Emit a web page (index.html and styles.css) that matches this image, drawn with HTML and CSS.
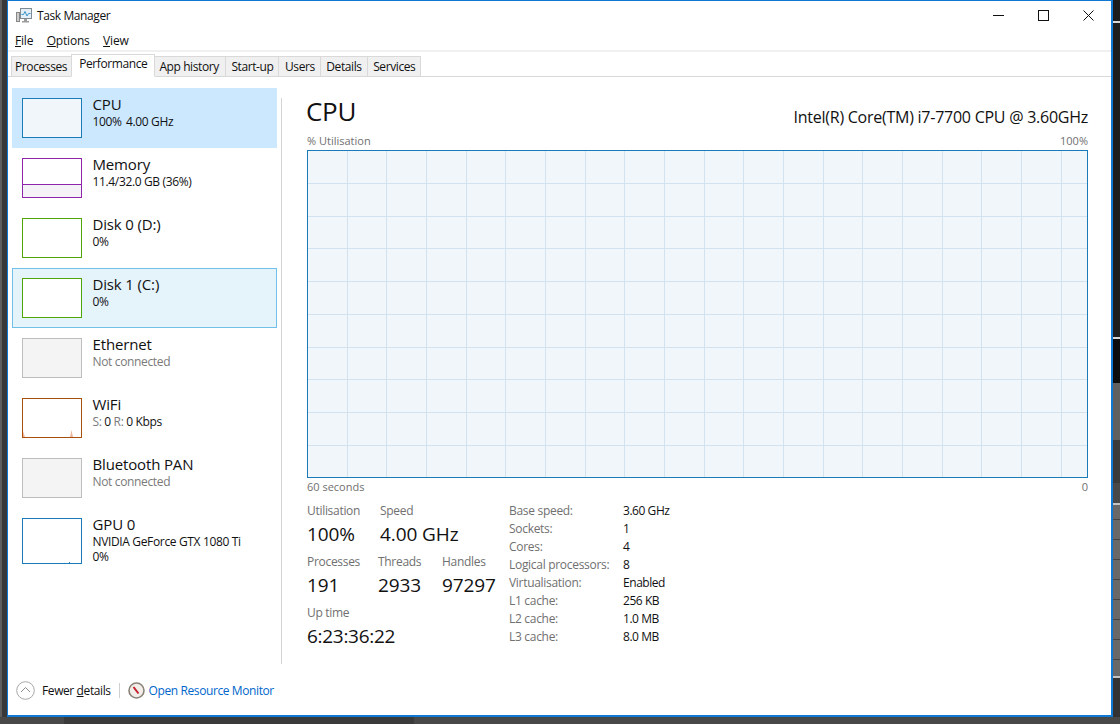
FILE: index.html
```html
<!DOCTYPE html>
<html lang="en">
<head>
<meta charset="utf-8">
<title>Task Manager</title>
<link rel="stylesheet" href="styles.css">
</head>
<body>
<div class="desktop">
<div class="desk-row">
<div class="strip-left"></div>
<div class="window">
  <header class="titlebar">
    <svg class="app-icon" width="16" height="15" viewBox="0 0 16 15"><rect x="4.500" y="0.500" width="11" height="10" fill="#e3eef6" stroke="#7f8c96"/><path d="M5.500 6.500h2l1.500-3 2 4.500 1.500-2.500h2" fill="none" stroke="#3f94cc"/><rect x="0.500" y="4.500" width="3" height="9" fill="#cfcfcf" stroke="#868686"/><path d="M8 11h3v2H8zM6 13h7v1.500H6z" fill="#9c9c9c"/></svg>
    <span class="title">Task Manager</span>
    <div class="controls">
      <svg class="ctl" width="11" height="11" viewBox="0 0 11 11"><path d="M0 5.500h11" stroke="#111" fill="none"/></svg>
      <svg class="ctl" width="11" height="11" viewBox="0 0 11 11"><rect x="0.500" y="0.500" width="10" height="10" stroke="#111" fill="none"/></svg>
      <svg class="ctl" width="11" height="11" viewBox="0 0 11 11"><path d="M0.500 0.500l10 10M10.500 0.500l-10 10" stroke="#111" fill="none"/></svg>
    </div>
  </header>
  <nav class="menu"><span><u>F</u>ile</span><span><u>O</u>ptions</span><span><u>V</u>iew</span></nav>
  <div class="tabs">
    <span class="tab">Processes</span>
    <span class="tab active">Performance</span>
    <span class="tab">App history</span>
    <span class="tab">Start-up</span>
    <span class="tab">Users</span>
    <span class="tab">Details</span>
    <span class="tab">Services</span>
  </div>
  <main class="content">
    <aside class="sidebar">
      <div class="item selected"><div class="thumb t-cpu"></div><div class="info"><div class="name">CPU</div><div class="sub">100%&nbsp;&thinsp;4.00 GHz</div></div></div>
      <div class="item"><div class="thumb t-mem"><div class="mem-fill"></div></div><div class="info"><div class="name">Memory</div><div class="sub">11.4/32.0 GB (36%)</div></div></div>
      <div class="item"><div class="thumb t-disk"></div><div class="info"><div class="name">Disk 0 (D:)</div><div class="sub">0%</div></div></div>
      <div class="item hovered"><div class="thumb t-disk"></div><div class="info"><div class="name">Disk 1 (C:)</div><div class="sub">0%</div></div></div>
      <div class="item"><div class="thumb t-off"></div><div class="info"><div class="name">Ethernet</div><div class="sub muted">Not connected</div></div></div>
      <div class="item"><div class="thumb t-wifi"><svg class="spark" width="58" height="38" viewBox="0 0 58 38"><path d="M0 38V32L2 38zM47 38L48.500 31 50 38z" fill="#efb79c"/></svg></div><div class="info"><div class="name">WiFi</div><div class="sub"><span class="muted">S:</span> 0 <span class="muted">R:</span> 0 Kbps</div></div></div>
      <div class="item"><div class="thumb t-off"></div><div class="info"><div class="name">Bluetooth PAN</div><div class="sub muted">Not connected</div></div></div>
      <div class="item gpu"><div class="thumb t-gpu"><svg class="spark" width="58" height="44" viewBox="0 0 58 44"><path d="M46 43h1v1h-1z" fill="#1b7ab8"/></svg></div><div class="info"><div class="name">GPU 0</div><div class="sub">NVIDIA GeForce GTX 1080 Ti</div><div class="sub">0%</div></div></div>
    </aside>
    <section class="detail">
      <div class="head"><h1>CPU</h1><div class="model">Intel(R) Core(TM) i7-7700 CPU @ 3.60GHz</div></div>
      <div class="axis top"><span>% Utilisation</span><span>100%</span></div>
      <svg class="graph" width="781" height="328" viewBox="0 0 781 328">
        <rect x="0.500" y="0.500" width="780" height="327" fill="#f1f6fa"/>
        <path d="M40.500 1V327M79.500 1V327M119.500 1V327M159.500 1V327M198.500 1V327M238.500 1V327M278.500 1V327M317.500 1V327M357.500 1V327M397.500 1V327M436.500 1V327M476.500 1V327M516.500 1V327M555.500 1V327M595.500 1V327M635.500 1V327M674.500 1V327M714.500 1V327M754.500 1V327M1 33.500H780M1 66.500H780M1 98.500H780M1 131.500H780M1 164.500H780M1 197.500H780M1 229.500H780M1 262.500H780M1 295.500H780" fill="none" stroke="#d2e2ef"/>
        <rect x="0.500" y="0.500" width="780" height="327" fill="none" stroke="#1b7ab8"/>
      </svg>
      <div class="axis bottom"><span>60 seconds</span><span>0</span></div>
      <div class="stats">
        <div class="live">
          <div class="row r1">
            <div class="stat s-util"><div class="label">Utilisation</div><div class="value">100%</div></div>
            <div class="stat"><div class="label">Speed</div><div class="value">4.00 GHz</div></div>
          </div>
          <div class="row r2">
            <div class="stat s-proc"><div class="label">Processes</div><div class="value">191</div></div>
            <div class="stat s-thr"><div class="label">Threads</div><div class="value">2933</div></div>
            <div class="stat"><div class="label">Handles</div><div class="value">97297</div></div>
          </div>
          <div class="row r3">
            <div class="stat"><div class="label">Up time</div><div class="value uptime">6:23:36:22</div></div>
          </div>
        </div>
        <dl class="specs">
          <dt>Base speed:</dt><dd>3.60 GHz</dd>
          <dt>Sockets:</dt><dd>1</dd>
          <dt>Cores:</dt><dd>4</dd>
          <dt>Logical processors:</dt><dd>8</dd>
          <dt>Virtualisation:</dt><dd>Enabled</dd>
          <dt>L1 cache:</dt><dd>256 KB</dd>
          <dt>L2 cache:</dt><dd>1.0 MB</dd>
          <dt>L3 cache:</dt><dd>8.0 MB</dd>
        </dl>
      </div>
    </section>
  </main>
  <footer class="footer">
    <svg class="fewer" width="19" height="19" viewBox="0 0 19 19"><circle cx="9.500" cy="9.500" r="8.800" fill="#fff" stroke="#a8a8a8"/><path d="M5 11l4.500-4.500L14 11" fill="none" stroke="#8c8c8c"/></svg>
    <span class="fewer-text">Fewer <u>d</u>etails</span>
    <span class="sep"></span>
    <svg class="res" width="17" height="17" viewBox="0 0 17 17"><circle cx="8.500" cy="8.500" r="7.500" fill="#f2efea" stroke="#8a8378" stroke-width="1.600"/><path d="M5.500 5l5 6.500" stroke="#c4202a" stroke-width="2" fill="none"/></svg>
    <a class="link">Open Resource Monitor</a>
  </footer>
</div>
<div class="strip-right"></div>
</div>
<div class="strip-bottom"></div>
</div>
</body>
</html>
```
FILE: styles.css
```css
* { box-sizing: border-box; }
html, body { margin: 0; height: 100%; }
body { font-family: "Open Sans", "Noto Sans", sans-serif; font-size: 12px; color: #111; overflow: hidden; }
.desktop { width: 1120px; height: 724px; background: #444; display: flex; flex-direction: column; }
.desk-row { display: flex; height: 717px; flex: none; }
.strip-left { width: 7px; flex: none; background: linear-gradient(90deg, #5e5e5e 0 2px, #383838 2px 7px); }
.strip-right { width: 7px; flex: none;
  background:
    linear-gradient(#1c1c1c 0 21px, #d8d8d8 21px 23px, #1e1e1e 23px 337px, #d8d8d8 337px 339px, #0c0c0c 339px 383px, #606060 383px 440px, #3a3a3a 440px 483px, #484848 483px 503px, #c4c4c4 503px 505px, transparent 505px 676px, #c4c4c4 676px 678px, #333 678px 717px),
    repeating-linear-gradient(#686868 0 19px, #444 19px 20px);
}
.strip-bottom { flex: 1; background: linear-gradient(90deg, #484848 0 64px, #3a3a3a 64px 414px, #484848 414px); }
.window { width: 1106px; height: 717px; flex: none; background: #fff; border: 1px solid #0f78d2; border-bottom-width: 2px; border-right-width: 2px; display: flex; flex-direction: column; }
.titlebar { height: 29px; display: flex; align-items: center; padding-left: 8px; flex: none; }
.app-icon { margin-right: 5px; }
.title { font-size: 12px; letter-spacing: -0.4px; }
.controls { margin-left: auto; display: flex; gap: 34px; padding-right: 17px; }
.ctl { display: block; }
.menu { height: 22px; display: flex; gap: 13.500px; padding-left: 7px; align-items: center; border-bottom: 2px solid #f0f0f0; flex: none; letter-spacing: -0.2px; padding-top: 1px; }
.tabs { height: 25px; display: flex; align-items: flex-end; padding-left: 3px; border-bottom: 1px solid #d9d9d9; flex: none; }
.tab { height: 21px; margin-bottom: -1px; padding: 0 5px 0 5.500px; line-height: 19px; background: #f0f0f0; border: 1px solid #d9d9d9; border-left-width: 0; letter-spacing: -0.4px; }
.tab:first-child { border-left-width: 1px; padding: 0 4px 0 3px; }
.tab.active { height: 23px; background: #fff; border-left-width: 1px; border-bottom-color: #fff; margin-left: -1px; padding: 0 7px; line-height: 18px; }
.active + .tab { padding-left: 4px; padding-right: 6px; }
.content { flex: 1; display: flex; min-height: 0; }
.sidebar { width: 273px; padding: 11px 0 0 4px; flex: none; }
.item { height: 60px; display: flex; padding: 9px 0 0 9px; border: 1px solid transparent; width: 265px; }
.item.selected { background: #cce8ff; border-color: #cce8ff; }
.item.hovered { background: #e5f3fb; border-color: #70c0e7; }
.thumb { width: 60px; height: 40px; border: 1px solid #999; flex: none; position: relative; overflow: hidden; }
.t-cpu { background: #f1f6fa; border-color: #1b7ab8; }
.t-mem { background: #fff; border-color: #8e24aa; display: flex; align-items: flex-end; }
.mem-fill { width: 100%; height: 13px; background: #f4f2f6; border-top: 1px solid #8e24aa; }
.t-disk { background: #fff; border-color: #4ea60b; }
.t-off { background: #f4f4f4; border-color: #bdbdbd; }
.t-wifi { background: #fff; border-color: #a7500d; }
.t-gpu { background: #fff; border-color: #1b7ab8; height: 46px; }
.spark { display: block; }
.info { margin-left: 10.500px; }
.name { font-size: 15px; line-height: 18px; letter-spacing: -0.15px; margin-top: -3px; }
.sub { font-size: 12px; line-height: 15px; letter-spacing: -0.35px; margin-top: 1px; white-space: nowrap; }
.gpu .sub + .sub { margin-top: 0; }
.muted { color: #7a7a7a; }
.detail { margin-top: 21px; border-left: 1px solid #d4d4d4; padding: 0 0 0 25px; width: 810px; flex: none; height: 566px; }
.head { display: flex; justify-content: space-between; height: 36px; width: 781px; }
h1 { margin: -2px 0 0 -1px; font-size: 26px; font-weight: 400; line-height: 30px; letter-spacing: -0.3px; }
.model { font-size: 16px; line-height: 20px; letter-spacing: -0.25px; margin-top: 9px; white-space: nowrap; }
.axis { display: flex; justify-content: space-between; width: 781px; color: #707070; font-size: 11px; line-height: 14px; }
.axis.top { height: 16px; }
.axis.bottom { height: 17px; margin-top: 2px; }
.graph { display: block; }
.stats { display: flex; margin-top: 6px; }
.live { width: 202px; flex: none; }
.row { display: flex; }
.r1 { height: 51px; }
.r2 { height: 51px; }
.label { color: #707070; font-size: 12px; line-height: 16px; letter-spacing: -0.3px; }
.value { font-size: 19px; line-height: 26px; letter-spacing: -0.1px; margin-top: 2px; white-space: nowrap; }
.uptime { letter-spacing: -0.3px; }
.s-util { width: 73px; }
.s-proc { width: 71px; }
.s-thr { width: 64px; }
.specs { margin: 0; display: grid; grid-template-columns: 114px auto; grid-auto-rows: 18px; line-height: 16px; letter-spacing: -0.3px; }
.specs dt { color: #707070; }
.specs dd { margin: 0; color: #111; letter-spacing: -0.45px; }
.footer { height: 50px; flex: none; display: flex; align-items: center; padding-left: 8px; margin-top: auto; }
.fewer { margin-right: 7px; }
.fewer-text { letter-spacing: -0.4px; }
.sep { width: 1px; height: 15px; background: #d0d0d0; margin: 0 8px; }
.res { margin-right: 4px; }
.link { color: #0066cc; letter-spacing: -0.4px; }
```
